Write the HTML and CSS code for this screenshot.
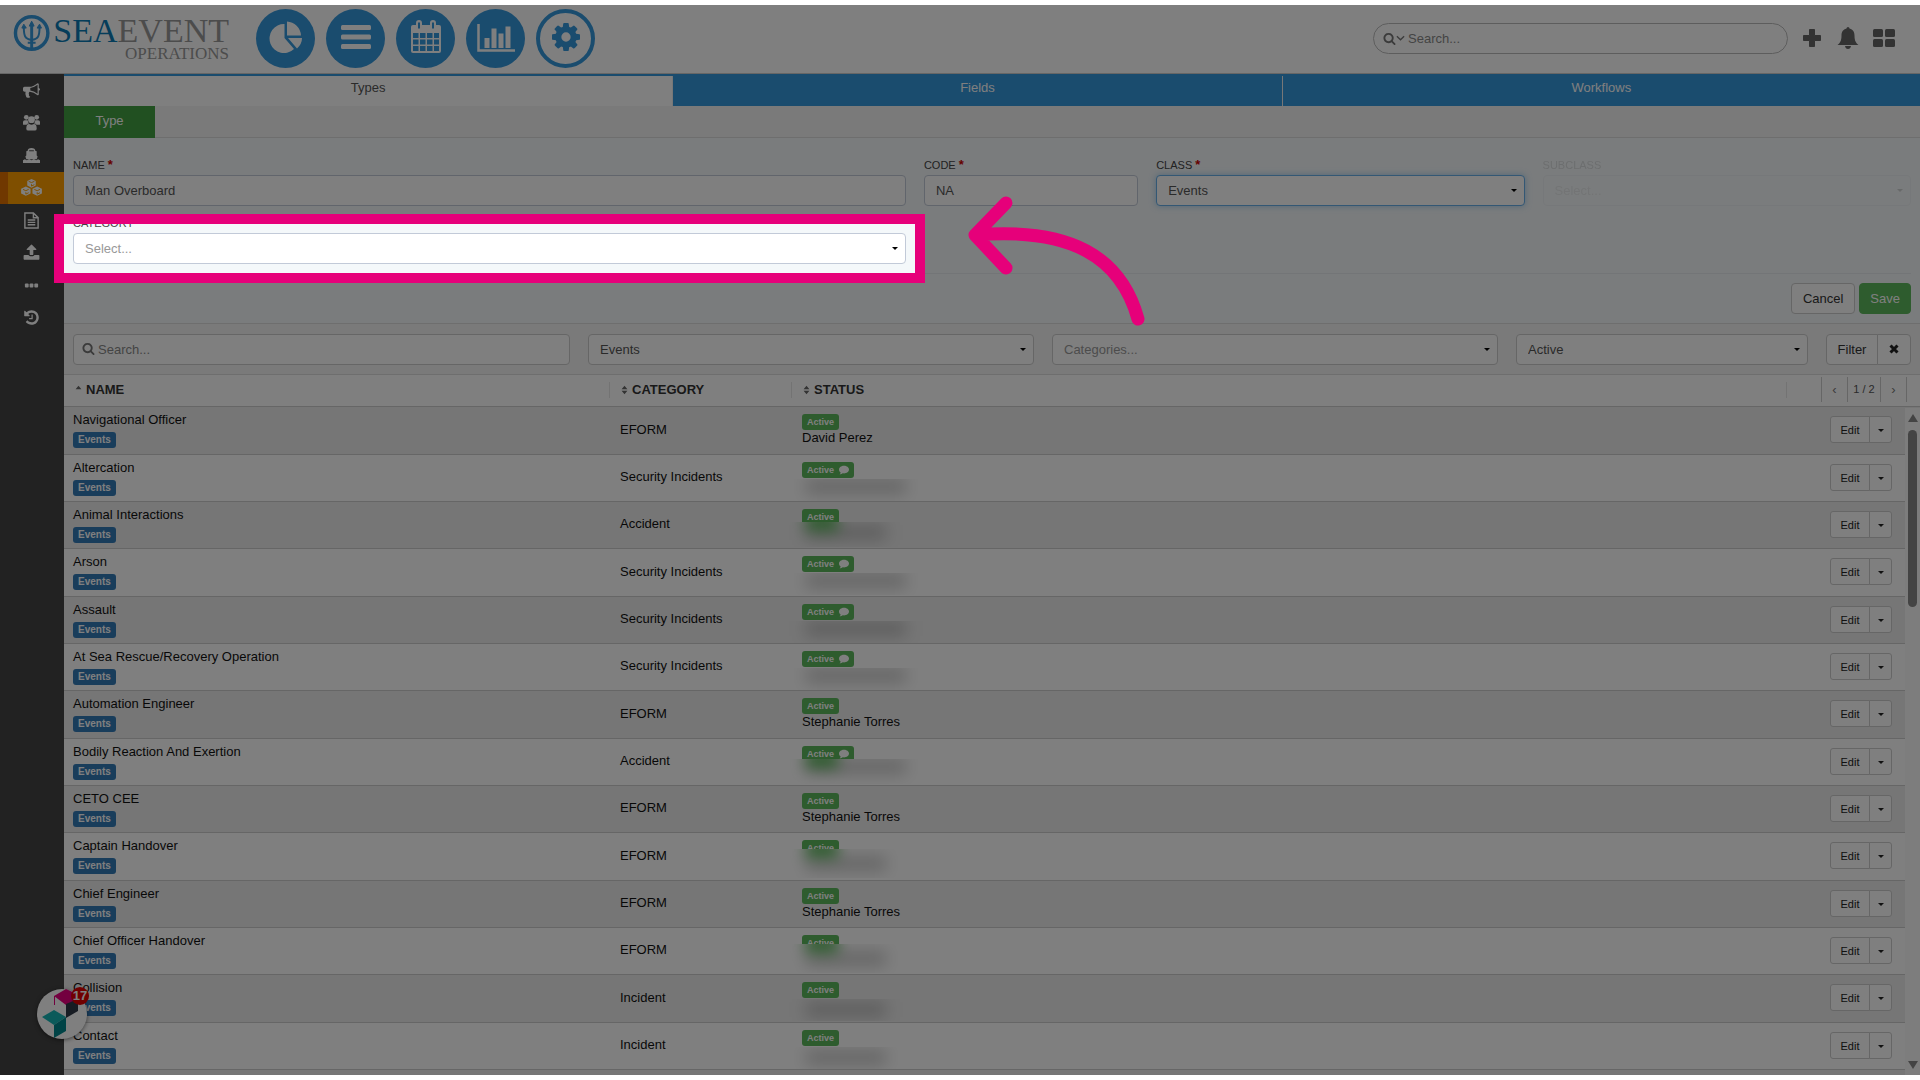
FILE: index.html
```
<!DOCTYPE html>
<html lang="en">
<head>
    <meta charset="UTF-8">
    <meta name="viewport" content="width=device-width, initial-scale=1.0">
    <title>SeaEvent Operations - Types</title>
    <link rel="stylesheet" href="styles.css">
</head>
<body>

    <!-- shared icons -->
    <svg class="sprite" aria-hidden="true">
        <symbol id="i-search" viewBox="0 0 1792 1792"><path d="M1216 832q0-185-131.5-316.5t-316.5-131.5-316.5 131.5-131.5 316.5 131.5 316.5 316.5 131.5 316.5-131.5 131.5-316.5zm512 832q0 52-38 90t-90 38q-54 0-90-38l-343-342q-179 124-399 124-143 0-273.5-55.5t-225-150-150-225-55.5-273.5 55.5-273.5 150-225 225-150 273.5-55.5 273.5 55.5 225 150 150 225 55.5 273.5q0 220-124 399l343 343q37 37 37 90z"/></symbol>
        <symbol id="i-comment" viewBox="0 0 16 16"><path d="M8 1c4.400 0 8 2.700 8 6.200s-3.600 6.200-8 6.200c-.8 0-1.500-.1-2.200-.2C4.500 14.300 3 15 1 15c.9-.8 1.500-1.800 1.700-3C1 11 0 9.400 0 7.200 0 3.700 3.600 1 8 1z"/></symbol>
        <symbol id="i-sort" viewBox="0 0 8 12"><path d="M4 1l3.500 4h-7zM4 11L.5 7h7z"/></symbol>
    </svg>

    <div class="app">

        <header class="topbar">
            <a class="logo" href="#" aria-label="SeaEvent Operations">
                <svg class="logo-mark" viewBox="0 0 38 38" fill="none" stroke="#3598dc">
                    <circle cx="19" cy="19" r="16.500" stroke-width="3.500"/>
                    <path d="M19 9v26" stroke-width="3"/>
                    <path d="M11 13c0 9 1 12 8 13 7-1 8-4 8-13M15 29h8" stroke-width="2"/>
                    <path d="M19 7l-2.500 5h5zM9 14l2-4 2.500 4zM24.500 14l2.500-4 2 4z" fill="#3598dc"/>
                </svg>
                <span class="logo-text">
                    <span class="logo-name"><b>SEA</b>EVENT</span>
                    <span class="logo-sub">OPERATIONS</span>
                </span>
            </a>
            <nav class="modules">
                <a href="#" class="module" aria-label="Dashboard">
                    <svg viewBox="0 0 38 34"><path d="M17.500 4v14l9.500 11A14.500 14.500 0 1 1 17.500 4zM20 1.500A15 15 0 0 1 34 15.500H20zM21 18h14q0 6-5 10.500z" fill="#fff"/></svg>
                </a>
                <a href="#" class="module" aria-label="List">
                    <svg viewBox="0 0 38 34" fill="#fff"><rect x="4" y="5" width="30" height="5" rx="1.500"/><rect x="4" y="14.500" width="30" height="5" rx="1.500"/><rect x="4" y="24" width="30" height="5" rx="1.500"/></svg>
                </a>
                <a href="#" class="module" aria-label="Calendar">
                    <svg viewBox="-2 0 38 34"><path d="M4 5h26q2 0 2 2v24q0 2-2 2H4q-2 0-2-2V7q0-2 2-2z" fill="#fff"/><path d="M10 3v5M24 3v5" stroke="#fff" stroke-width="6" stroke-linecap="round"/><path d="M10 2.500v6M24 2.500v6" stroke="#3598dc" stroke-width="2"/><path d="M4 13h5.500v5H4zM11 13h5.500v5H11zM18 13h5.500v5H18zM25 13h5v5h-5zM4 19.500h5.500v5H4zM11 19.500h5.500v5H11zM18 19.500h5.500v5H18zM25 19.500h5v5h-5zM4 26h5.500v5H4zM11 26h5.500v5H11zM18 26h5.500v5H18zM25 26h5v5h-5z" fill="#3598dc"/></svg>
                </a>
                <a href="#" class="module" aria-label="Reports">
                    <svg viewBox="0 0 38 34"><path d="M1.500 4v26.500H38" fill="none" stroke="#fff" stroke-width="2.500"/><path d="M7.500 18h5v10h-5zM14.500 8.500h5V28h-5zM21.500 13.500h5V28h-5zM28.500 6.500h5V28h-5z" fill="#fff"/></svg>
                </a>
                <a href="#" class="module module-active" aria-label="Settings">
                    <svg viewBox="128 128 1536 1536" fill="#3598dc"><path d="M1152 896q0-106-75-181t-181-75-181 75-75 181 75 181 181 75 181-75 75-181zm512-109v222q0 12-8 23t-20 13l-185 28q-19 54-39 91 35 50 107 138 10 12 10 25t-9 23q-27 37-99 108t-94 71q-12 0-26-9l-138-108q-44 23-91 38-16 136-29 186-7 28-36 28h-222q-14 0-24.500-8.500t-11.500-21.500l-28-184q-49-16-90-37l-141 107q-10 9-25 9-14 0-25-11-126-114-165-168-7-10-7-23 0-12 8-23 15-21 51-66.500t54-70.500q-27-50-41-99l-183-27q-13-2-21-12.500t-8-23.500v-222q0-12 8-23t19-13l186-28q14-46 39-92-40-57-107-138-10-12-10-24 0-10 9-23 26-36 98.500-107.500t94.500-71.500q13 0 26 10l138 107q44-23 91-38 16-136 29-186 7-28 36-28h222q14 0 24.500 8.500t11.500 21.500l28 184q49 16 90 37l142-107q9-9 24-9 13 0 25 10 129 119 165 170 7 8 7 22 0 12-8 23-15 21-51 66.500t-54 70.500q26 50 41 98l183 28q13 2 21 12.500t8 23.500z"/></svg>
                </a>
            </nav>
            <div class="top-search">
                <svg class="icon-search"><use href="#i-search"/></svg>
                <svg class="icon-down" viewBox="0 0 10 8"><path d="M1 2l4 4 4-4" fill="none" stroke="#777" stroke-width="1.500"/></svg>
                <input type="text" placeholder="Search..." aria-label="Search">
            </div>
            <div class="top-actions">
                <button type="button" aria-label="Add"><svg viewBox="0 0 22 22"><path d="M8.500 2.500h5v6h6v5h-6v6h-5v-6h-6v-5h6z" stroke="#666" stroke-linejoin="round"/></svg></button>
                <button type="button" aria-label="Notifications"><svg viewBox="0 0 22 22"><path d="M11 0q1.500 0 1.500 1.500c3.500.8 5 3.500 5 7C17.500 14 19 16 21.500 18h-21C3 16 4.500 14 4.500 8.500c0-3.500 1.500-6.200 5-7Q9.500 0 11 0zM8 19h6q-.5 3-3 3t-3-3z"/></svg></button>
                <button type="button" aria-label="Apps"><svg viewBox="0 0 22 20"><rect x="0" y="1" width="10" height="8" rx="1.500"/><rect x="12" y="1" width="10" height="8" rx="1.500"/><rect x="0" y="11" width="10" height="8" rx="1.500"/><rect x="12" y="11" width="10" height="8" rx="1.500"/></svg></button>
            </div>
        </header>

        <div class="body">
            <nav class="sidebar">
                <a href="#" aria-label="Announcements"><svg viewBox="0 0 1792 1792"><path d="M1664 640q53 0 90.500 37.500t37.500 90.500-37.500 90.500-90.500 37.500v384q0 52-38 90t-90 38q-417-347-812-380-58 19-91 66t-31 100.500 40 92.500q-20 33-23 65.500t6 58 33.500 55 48 50 61.500 50.500q-29 58-111.500 83t-168.500 11.500-132-55.500q-7-23-29.500-87.500t-32-94.500-23-89-15-101 3.500-98.500 22-110.500h-122q-66 0-113-47t-47-113v-192q0-66 47-113t113-47h480q435 0 896-384 52 0 90 38t38 90v384zm-128 604v-954q-394 302-768 343v270q377 42 768 341z"/></svg></a>
                <a href="#" aria-label="Users"><svg viewBox="0 0 18 18"><circle cx="3.500" cy="3.500" r="2.500"/><circle cx="14.500" cy="3.500" r="2.500"/><circle cx="9" cy="6" r="3.600"/><path d="M0 11V8.500Q0 6.500 2 6.500h3Q5 9 6.500 10 4.500 10 3.800 11.500H1Q0 11.500 0 11zM18 11V8.500q0-2-2-2h-3q0 2.500-1.500 3.500 2 0 2.700 1.500H17q1 0 1-.5zM3.500 15q0-4.500 3-4.500 2.500 1.500 5 0 3 0 3 4.500v.5q0 2-2 2h-7q-2 0-2-2z"/></svg></a>
                <a href="#" aria-label="Vessels"><svg viewBox="0 0 18 18"><path d="M5 4q0-3 4-3t4 3l1.500.5V9l1 1-1 3h-11l-1-3 1-1V4.500zM0 14l2-1 2 1 2.500-1 2.500 1 2.500-1 2.500 1 2-1 2 1v3H0z"/><path d="M6.500 4h5" stroke="#444" stroke-width="1"/></svg></a>
                <a href="#" class="active" aria-label="Types"><svg class="wide" viewBox="0 0 22 18"><path d="M11 0l4.500 2v5L11 9.200 6.500 7V2zM5 8l5 2.300v5L5 17.800 0 15.300v-5zM17 8l5 2.300v5l-5 2.500-5-2.500v-5z"/><path d="M8 2.500l3 1.300 3-1.300M11 5.500v2L14 6M2 11l3 1.400L8 11M5 14v2l3-1.500M14 11l3 1.400 3-1.400M17 14v2l3-1.500" fill="none" stroke="#ff9e00"/></svg></a>
                <a href="#" aria-label="Documents"><svg viewBox="0 0 18 18"><path d="M2 1h9l5 5v11H2zM11 1v5h5M5 8.500h8M5 11h8M5 13.500h8" fill="none" stroke="#fff" stroke-width="1.500"/></svg></a>
                <a href="#" aria-label="Upload"><svg viewBox="0 0 1792 1792"><path d="M1728 1248v320q0 40-28 68t-68 28h-1472q-40 0-68-28t-28-68v-320q0-40 28-68t68-28h427q21 56 70.500 92t110.500 36h256q61 0 110.500-36t70.500-92h427q40 0 68 28t28 68zm-325-648q-17 40-59 40h-256v448q0 26-19 45t-45 19h-256q-26 0-45-19t-19-45v-448h-256q-42 0-59-40-17-39 14-69l448-448q18-19 45-19t45 19l448 448q31 30 14 69z"/></svg></a>
                <a href="#" aria-label="More"><svg viewBox="0 0 18 18"><rect x="2" y="7" width="4" height="4" rx="1"/><rect x="7" y="7" width="4" height="4" rx="1"/><rect x="12" y="7" width="4" height="4" rx="1"/></svg></a>
                <a href="#" aria-label="History"><svg viewBox="0 0 1792 1792"><path d="M1664 896q0 156-61 298t-164 245-245 164-298 61q-172 0-327-72.500t-264-204.500q-7-10-6.500-22.500t8.500-20.500l137-138q10-9 25-9 16 2 23 12 73 95 179 147t225 52q104 0 198.500-40.500t163.500-109.500 109.500-163.500 40.500-198.500-40.500-198.500-109.500-163.500-163.500-109.500-198.500-40.500q-98 0-188 35.500t-160 101.500l137 138q31 30 14 69-17 40-59 40h-448q-26 0-45-19t-19-45v-448q0-42 40-59 39-17 69 14l130 129q107-101 244.500-156.500t284.500-55.500q156 0 298 61t245 164 164 245 61 298zm-640-288v448q0 14-9 23t-23 9h-320q-14 0-23-9t-9-23v-64q0-14 9-23t23-9h224v-352q0-14 9-23t23-9h64q14 0 23 9t9 23z"/></svg></a>
            </nav>

            <main class="content">
                <nav class="tabs">
                    <a href="#" class="tab tab-types tab-active">Types</a>
                    <a href="#" class="tab tab-fields">Fields</a>
                    <a href="#" class="tab tab-workflows">Workflows</a>
                </nav>
                <div class="subtabs"><a href="#" class="subtab">Type</a></div>

                <form class="type-form">
                    <div class="form-grid">
                        <div class="field">
                            <label for="name">NAME <span class="req">*</span></label>
                            <input class="control" type="text" id="name" value="Man Overboard">
                        </div>
                        <div class="field">
                            <label for="code">CODE <span class="req">*</span></label>
                            <input class="control" type="text" id="code" value="NA">
                        </div>
                        <div class="field">
                            <label for="class">CLASS <span class="req">*</span></label>
                            <div class="select"><select class="control focused" id="class"><option>Events</option></select></div>
                        </div>
                        <div class="field disabled">
                            <label for="subclass">SUBCLASS</label>
                            <div class="select"><select class="control muted" id="subclass" disabled><option>Select...</option></select></div>
                        </div>
                        <div class="field field-tour">
                            <label for="category">CATEGORY</label>
                            <div class="select"><select class="control muted" id="category"><option>Select...</option></select></div>
                            <!-- tour step: dims the page around the field -->
                            <div class="spotlight"></div>
                            <svg class="tour-arrow" viewBox="0 0 185 145"><path d="M174 129C157 67 107 37 11 45M42 13L11 45l31 33"/></svg>
                        </div>
                    </div>
                    <div class="form-actions">
                        <button type="button" class="btn">Cancel</button>
                        <button type="submit" class="btn btn-save">Save</button>
                    </div>
                </form>

                <div class="filters">
                    <div class="filter-search">
                        <svg class="icon-search"><use href="#i-search"/></svg>
                        <input class="control" type="text" placeholder="Search..." aria-label="Search types">
                    </div>
                    <div class="select filter-class"><select class="control" aria-label="Class"><option>Events</option></select></div>
                    <div class="select filter-category"><select class="control muted" aria-label="Categories"><option>Categories...</option></select></div>
                    <div class="select filter-status"><select class="control" aria-label="Status"><option>Active</option></select></div>
                    <div class="btn-group">
                        <button type="button" class="btn">Filter</button><button type="button" class="btn btn-clear" aria-label="Clear"><svg viewBox="0 0 10 10"><path d="M1.500 1.500l7 7M8.500 1.500l-7 7" stroke="#222" stroke-width="3"/></svg></button>
                    </div>
                </div>

                <div class="list">
                    <table class="types">
                        <thead>
                            <tr>
                                <th class="col-name"><div class="head"><svg viewBox="0 0 8 12"><path d="M4 1l3.500 4h-7z"/></svg>NAME</div></th>
                                <th class="col-category"><div class="head"><svg><use href="#i-sort"/></svg>CATEGORY</div></th>
                                <th class="col-status"><div class="head"><svg><use href="#i-sort"/></svg>STATUS</div></th>
                                <th class="col-actions"><div class="head"><div class="pager"><button type="button" aria-label="Previous">&#8249;</button><span>1 / 2</span><button type="button" aria-label="Next">&#8250;</button></div></div></th>
                            </tr>
                        </thead>
                        <tbody>
                            <tr>
                                <td>Navigational Officer<span class="tag">Events</span></td><td>EFORM</td>
                                <td><span class="status">Active</span><span class="person">David Perez</span></td>
                                <td><div class="row-btns"><button type="button">Edit</button><button type="button" class="drop" aria-label="More"></button></div></td>
                            </tr>
                            <tr>
                                <td>Altercation<span class="tag">Events</span></td><td>Security Incidents</td>
                                <td><span class="status">Active <svg><use href="#i-comment"/></svg></span><span class="hidden-name"></span></td>
                                <td><div class="row-btns"><button type="button">Edit</button><button type="button" class="drop" aria-label="More"></button></div></td>
                            </tr>
                            <tr>
                                <td>Animal Interactions<span class="tag">Events</span></td><td>Accident</td>
                                <td><span class="status">Active</span><span class="hidden-name short green"></span></td>
                                <td><div class="row-btns"><button type="button">Edit</button><button type="button" class="drop" aria-label="More"></button></div></td>
                            </tr>
                            <tr>
                                <td>Arson<span class="tag">Events</span></td><td>Security Incidents</td>
                                <td><span class="status">Active <svg><use href="#i-comment"/></svg></span><span class="hidden-name"></span></td>
                                <td><div class="row-btns"><button type="button">Edit</button><button type="button" class="drop" aria-label="More"></button></div></td>
                            </tr>
                            <tr>
                                <td>Assault<span class="tag">Events</span></td><td>Security Incidents</td>
                                <td><span class="status">Active <svg><use href="#i-comment"/></svg></span><span class="hidden-name"></span></td>
                                <td><div class="row-btns"><button type="button">Edit</button><button type="button" class="drop" aria-label="More"></button></div></td>
                            </tr>
                            <tr>
                                <td>At Sea Rescue/Recovery Operation<span class="tag">Events</span></td><td>Security Incidents</td>
                                <td><span class="status">Active <svg><use href="#i-comment"/></svg></span><span class="hidden-name"></span></td>
                                <td><div class="row-btns"><button type="button">Edit</button><button type="button" class="drop" aria-label="More"></button></div></td>
                            </tr>
                            <tr>
                                <td>Automation Engineer<span class="tag">Events</span></td><td>EFORM</td>
                                <td><span class="status">Active</span><span class="person">Stephanie Torres</span></td>
                                <td><div class="row-btns"><button type="button">Edit</button><button type="button" class="drop" aria-label="More"></button></div></td>
                            </tr>
                            <tr>
                                <td>Bodily Reaction And Exertion<span class="tag">Events</span></td><td>Accident</td>
                                <td><span class="status">Active <svg><use href="#i-comment"/></svg></span><span class="hidden-name green"></span></td>
                                <td><div class="row-btns"><button type="button">Edit</button><button type="button" class="drop" aria-label="More"></button></div></td>
                            </tr>
                            <tr>
                                <td>CETO CEE<span class="tag">Events</span></td><td>EFORM</td>
                                <td><span class="status">Active</span><span class="person">Stephanie Torres</span></td>
                                <td><div class="row-btns"><button type="button">Edit</button><button type="button" class="drop" aria-label="More"></button></div></td>
                            </tr>
                            <tr>
                                <td>Captain Handover<span class="tag">Events</span></td><td>EFORM</td>
                                <td><span class="status">Active</span><span class="hidden-name short green tall"></span></td>
                                <td><div class="row-btns"><button type="button">Edit</button><button type="button" class="drop" aria-label="More"></button></div></td>
                            </tr>
                            <tr>
                                <td>Chief Engineer<span class="tag">Events</span></td><td>EFORM</td>
                                <td><span class="status">Active</span><span class="person">Stephanie Torres</span></td>
                                <td><div class="row-btns"><button type="button">Edit</button><button type="button" class="drop" aria-label="More"></button></div></td>
                            </tr>
                            <tr>
                                <td>Chief Officer Handover<span class="tag">Events</span></td><td>EFORM</td>
                                <td><span class="status">Active</span><span class="hidden-name short green tall"></span></td>
                                <td><div class="row-btns"><button type="button">Edit</button><button type="button" class="drop" aria-label="More"></button></div></td>
                            </tr>
                            <tr>
                                <td>Collision<span class="tag">Events</span></td><td>Incident</td>
                                <td><span class="status">Active</span><span class="hidden-name short"></span></td>
                                <td><div class="row-btns"><button type="button">Edit</button><button type="button" class="drop" aria-label="More"></button></div></td>
                            </tr>
                            <tr>
                                <td>Contact<span class="tag">Events</span></td><td>Incident</td>
                                <td><span class="status">Active</span><span class="hidden-name short"></span></td>
                                <td><div class="row-btns"><button type="button">Edit</button><button type="button" class="drop" aria-label="More"></button></div></td>
                            </tr>
                            <tr><td></td><td></td><td></td><td></td></tr>
                        </tbody>
                    </table>
                    <div class="scrollbar"><span class="arrow-up"></span><span class="thumb"></span><span class="arrow-down"></span></div>
                </div>
            </main>
        </div>

        <button type="button" class="widget" aria-label="Guides">
            <svg viewBox="0 0 50 50">
                <path d="M17 7l12-7 13 6-2 5-11 5z" fill="#e6007e"/><path d="M17 7l1 0v9h-1z" fill="#e6007e"/>
                <path d="M29 15l12-5v12l-12 7z" fill="#2f3847"/>
                <path d="M5 28l12-7 12 7-12 8z" fill="#16b5b5"/><path d="M17 36l12-8v14l-12 7z" fill="#00878c"/>
            </svg>
            <span class="widget-count">17</span>
        </button>
    </div>

</body>
</html>
```
FILE: styles.css
```
* {
    box-sizing: border-box;
}
body {
    margin: 0;
    background: #fff;
    font-family: "Liberation Sans", Arial, sans-serif;
    font-size: 13px;
    line-height: 16px;
    color: #111;
}
a {
    text-decoration: none;
    color: inherit;
}
button, input, select {
    font-family: inherit;
    font-size: 13px;
    margin: 0;
}
.sprite {
    display: none;
}
.app {
    position: relative;
    display: flex;
    flex-direction: column;
    height: calc(100vh - 10px);
    margin: 5px 0;
    overflow: hidden;
}

/* top bar */
.topbar {
    display: flex;
    align-items: center;
    flex: none;
    height: 69px;
    padding: 0 25px 2px 13px;
    border-bottom: 1px solid #ccc;
}
.logo {
    display: flex;
    width: 216px;
    margin-right: 27px;
    padding-bottom: 2px;
    color: #999;
    font-family: "Liberation Serif", "Times New Roman", serif;
}
.logo-mark {
    width: 38px;
    height: 38px;
    margin-right: 3px;
}
.logo-text {
    display: flex;
    flex-direction: column;
    align-items: flex-end;
}
.logo-name {
    font-size: 34px;
    line-height: 34px;
}
.logo-name b {
    font-weight: normal;
    color: #0a7ab5;
}
.logo-sub {
    font-size: 17px;
    line-height: 12px;
}
.modules {
    display: flex;
    gap: 11px;
}
.module {
    display: flex;
    align-items: center;
    justify-content: center;
    width: 59px;
    height: 59px;
    padding-bottom: 3px;
    border-radius: 50%;
    background: #3598dc;
}
.module svg {
    width: 38px;
    height: 34px;
}
.module-active {
    background: #fff;
    border: 4px solid #3598dc;
}
.module-active svg {
    width: 28px;
    height: 28px;
}
.top-search {
    display: flex;
    align-items: center;
    width: 415px;
    height: 31px;
    margin-left: auto;
    padding: 0 9px;
    border: 1px solid #bbb;
    border-radius: 16px;
}
.icon-search {
    width: 13px;
    height: 13px;
    fill: #777;
}
.icon-down {
    width: 9px;
    height: 8px;
    margin-right: 1px;
}
.top-search input {
    flex: 1;
    border: 0;
    outline: 0;
    background: none;
}
::placeholder {
    color: #888;
    opacity: 1;
}
.top-actions {
    display: flex;
    gap: 14px;
    margin-left: 13px;
}
.top-actions button {
    width: 22px;
    height: 22px;
    padding: 0;
    border: 0;
    background: none;
}
.top-actions svg {
    display: block;
    width: 22px;
    height: 22px;
    fill: #666;
}

/* sidebar */
.body {
    display: flex;
    flex: 1;
    min-height: 0;
}
.sidebar {
    flex: none;
    width: 64px;
    background: #444;
}
.sidebar a {
    display: flex;
    align-items: center;
    justify-content: center;
    height: 32px;
    padding: 0 1px 1px 0;
}
.sidebar a:nth-child(odd) {
    height: 33px;
}
.sidebar svg {
    width: 17px;
    height: 17px;
    fill: #fff;
}
.sidebar .wide {
    width: 21px;
}
.sidebar .active {
    padding-right: 10px;
    border-left: 8px solid #e07000;
    background: #ff9e00;
}

/* tabs */
.content {
    display: flex;
    flex-direction: column;
    flex: 1;
    min-width: 0;
}
.tabs {
    display: flex;
    flex: none;
    height: 32px;
    border-top: 2px solid #3598dc;
    background: #3598dc;
}
.tab {
    flex: 608 1 0;
    line-height: 24px;
    text-align: center;
    color: #fff;
    border-left: 1px solid #eee;
}
.tab-workflows {
    flex-grow: 637;
}
.tab-active {
    border: 0;
    background: #fff;
    color: #555;
}
.subtabs {
    display: flex;
    flex: none;
    height: 32px;
    border-bottom: 1px solid #ddd;
    background: #f5f5f5;
}
.subtab {
    width: 91px;
    height: 32px;
    line-height: 30px;
    text-align: center;
    color: #fff;
    background: #42a042;
}

/* form */
.type-form {
    padding: 18px 9px 0;
    border-bottom: 1px solid #ddd;
    background: #f4f8fa;
}
.form-grid {
    display: grid;
    grid-template-columns: 832fr 214fr 368fr 368fr;
    gap: 8px 18px;
    padding-bottom: 9px;
}
.field label {
    display: block;
    height: 16px;
    margin-bottom: 3px;
    font-size: 11px;
    line-height: 18px;
    color: #444;
}
.req {
    color: #c00;
    font-size: 13px;
    font-weight: bold;
}
.control {
    display: block;
    width: 100%;
    height: 31px;
    padding: 0 11px;
    border: 1px solid #c2cad8;
    border-radius: 4px;
    outline: 0;
    background: #fff;
    color: #555;
    appearance: none;
}
.muted {
    color: #999;
    opacity: 1;
}
.focused {
    border-color: #66afe9;
    box-shadow: 0 0 6px rgba(102, 175, 233, 0.6);
}
.select {
    position: relative;
}
.select::after {
    content: "";
    position: absolute;
    top: 14px;
    right: 8px;
    border: 3px solid transparent;
    border-top-color: #000;
    border-bottom: 0;
}
.disabled {
    opacity: 0.15;
}
.field-tour {
    position: relative;
}
.spotlight {
    position: absolute;
    z-index: 10;
    top: 10px;
    right: -9px;
    bottom: -9px;
    left: -9px;
    box-shadow: 0 0 0 10px #e6007a, 0 0 0 4000px rgba(0, 0, 0, 0.5);
    pointer-events: none;
}
.tour-arrow {
    position: absolute;
    z-index: 11;
    top: -24px;
    left: calc(100% + 58px);
    width: 185px;
    height: 145px;
    fill: none;
    stroke: #e6007a;
    stroke-width: 13;
    stroke-linecap: round;
    stroke-linejoin: round;
}
.form-actions {
    display: flex;
    justify-content: flex-end;
    gap: 4px;
    padding: 9px 0;
    border-top: 1px solid #e7ebee;
}
.btn {
    height: 31px;
    padding: 0 11px 1px;
    border: 1px solid #ccc;
    border-radius: 4px;
    background: #fff;
    color: #333;
}
.btn-save {
    padding: 0 10px 1px;
    border-color: #5cb85c;
    background: #5cb85c;
    color: #fff;
}

/* filters */
.filters {
    display: flex;
    gap: 18px;
    padding: 10px 9px 9px;
    border-bottom: 1px solid #ddd;
    background: #f5f5f5;
}
.filters .control, .filters .btn {
    border-color: #ccc;
}
.filter-search {
    position: relative;
    flex: 497 1 0;
}
.filter-search .icon-search {
    position: absolute;
    top: 8px;
    left: 9px;
}
.filter-search .control {
    padding-left: 24px;
}
.filter-class, .filter-category {
    flex: 446 1 0;
}
.filter-status {
    flex: 292 1 0;
}
.btn-group {
    display: flex;
    width: 85px;
}
.btn-group .btn {
    flex: 1;
    padding: 0 10px 1px;
    border-radius: 4px 0 0 4px;
}
.btn-group .btn-clear {
    flex: 0 0 34px;
    margin-left: -1px;
    border-radius: 0 4px 4px 0;
}
.btn-clear svg {
    width: 10px;
    height: 10px;
}

/* list */
.list {
    position: relative;
    flex: 1;
    min-height: 0;
    overflow: hidden;
}
.types {
    width: 100%;
    table-layout: fixed;
    border-collapse: separate;
    border-spacing: 0;
}
th {
    height: 32px;
    padding: 0 0 2px;
    border-bottom: 1px solid #ccc;
    text-align: left;
}
.col-name {
    width: 545px;
}
.col-category {
    width: 182px;
}
.col-actions {
    width: 134px;
}
.head {
    display: flex;
    align-items: center;
    height: 16px;
    padding-left: 11px;
    border-left: 1px solid #e7e7e7;
    color: #333;
}
.col-name .head {
    padding-left: 10px;
    border-left-color: transparent;
}
.head svg {
    width: 7px;
    height: 10px;
    margin-right: 4px;
    fill: #666;
}
.pager {
    display: flex;
    margin-left: auto;
    margin-right: 13px;
    border-left: 1px solid #ccc;
    font-size: 11px;
    font-weight: normal;
    line-height: 25px;
    color: #666;
}
.pager span, .pager button {
    height: 25px;
    padding: 0;
    border: 0;
    border-right: 1px solid #ccc;
    background: none;
    color: #777;
    text-align: center;
}
.pager button {
    width: 26px;
}
.pager span {
    width: 33px;
    color: #555;
}
td {
    height: 47px;
    padding: 5px 0 0 11px;
    border-bottom: 1px solid #ccc;
    vertical-align: top;
}
tr:nth-child(3n+1) td {
    height: 48px;
}
td:first-child {
    padding-left: 9px;
}
td:nth-child(2) {
    padding: 0 0 2px 11px;
    vertical-align: middle;
}
td:nth-child(3) {
    padding-top: 7px;
}
tbody tr {
    background: #fff;
}
tbody tr:nth-child(odd) {
    background: #ececec;
}
.tag, .status {
    display: block;
    width: fit-content;
    height: 16px;
    border-radius: 3px;
    color: #fff;
    font-weight: bold;
}
.tag {
    margin-top: 4px;
    padding: 0 5px;
    background: #337ab7;
    font-size: 10px;
}
.status {
    padding: 0 5px;
    background: #5cb85c;
    font-size: 9px;
}
.status svg {
    width: 10px;
    height: 10px;
    margin-left: 2px;
    fill: #fff;
    vertical-align: -2px;
}
.person {
    display: block;
    line-height: 15px;
}
/* names masked for privacy */
.hidden-name {
    position: relative;
    display: block;
    width: 190px;
    height: 22px;
    margin: 1px 0 0 -30px;
    overflow: hidden;
}
.hidden-name::before {
    content: "";
    position: absolute;
    top: 0;
    left: 34px;
    width: 100px;
    height: 15px;
    background: rgba(0, 0, 0, 0.2);
    filter: blur(8px);
}
.short::before {
    top: 3px;
    width: 80px;
}
.green {
    height: 25px;
    margin-top: -3px;
    background: #fff;
}
tr:nth-child(odd) .green {
    background: #ececec;
}
.green::after {
    content: "";
    position: absolute;
    top: -7px;
    left: 34px;
    width: 32px;
    height: 16px;
    background: #5cb85c;
    filter: blur(7px);
}
.tall {
    height: 29px;
    margin-top: -7px;
}
.tall::before {
    top: 7px;
}
.row-btns {
    display: flex;
    justify-content: flex-end;
    margin-top: 4px;
    padding-right: 28px;
}
.row-btns button {
    width: 40px;
    height: 27px;
    padding: 0;
    border: 1px solid #ccc;
    border-radius: 3px 0 0 3px;
    background: #fff;
    font-size: 11px;
    color: #222;
}
.row-btns .drop {
    width: 23px;
    margin-left: -1px;
    border-radius: 0 3px 3px 0;
}
.drop::after {
    content: "";
    display: inline-block;
    vertical-align: middle;
    border: 3px solid transparent;
    border-top-color: #222;
    border-bottom: 0;
}
.scrollbar {
    position: absolute;
    top: 33px;
    right: 0;
    bottom: 0;
    display: flex;
    flex-direction: column;
    align-items: center;
    width: 15px;
    padding: 6px 0;
    background: #fafafa;
}
.arrow-up, .arrow-down {
    border: 5px solid transparent;
    border-top: 0;
    border-bottom: 8px solid #888;
}
.arrow-down {
    margin-top: auto;
    border-top: 8px solid #888;
    border-bottom: 0;
}
.thumb {
    width: 9px;
    height: 27%;
    margin-top: 8px;
    border-radius: 5px;
    background: #888;
}

/* guide launcher */
.widget {
    position: absolute;
    bottom: 36px;
    left: 37px;
    width: 50px;
    height: 50px;
    padding: 0;
    border: 0;
    border-radius: 50%;
    background: #fff;
    box-shadow: 0 1px 4px rgba(0, 0, 0, 0.5);
}
.widget svg {
    display: block;
    width: 50px;
    height: 50px;
}
.widget-count {
    position: absolute;
    top: -2px;
    right: -2px;
    width: 18px;
    height: 18px;
    border-radius: 50%;
    background: #e00000;
    color: #fff;
    font-size: 13px;
    font-weight: bold;
    line-height: 18px;
}
```
